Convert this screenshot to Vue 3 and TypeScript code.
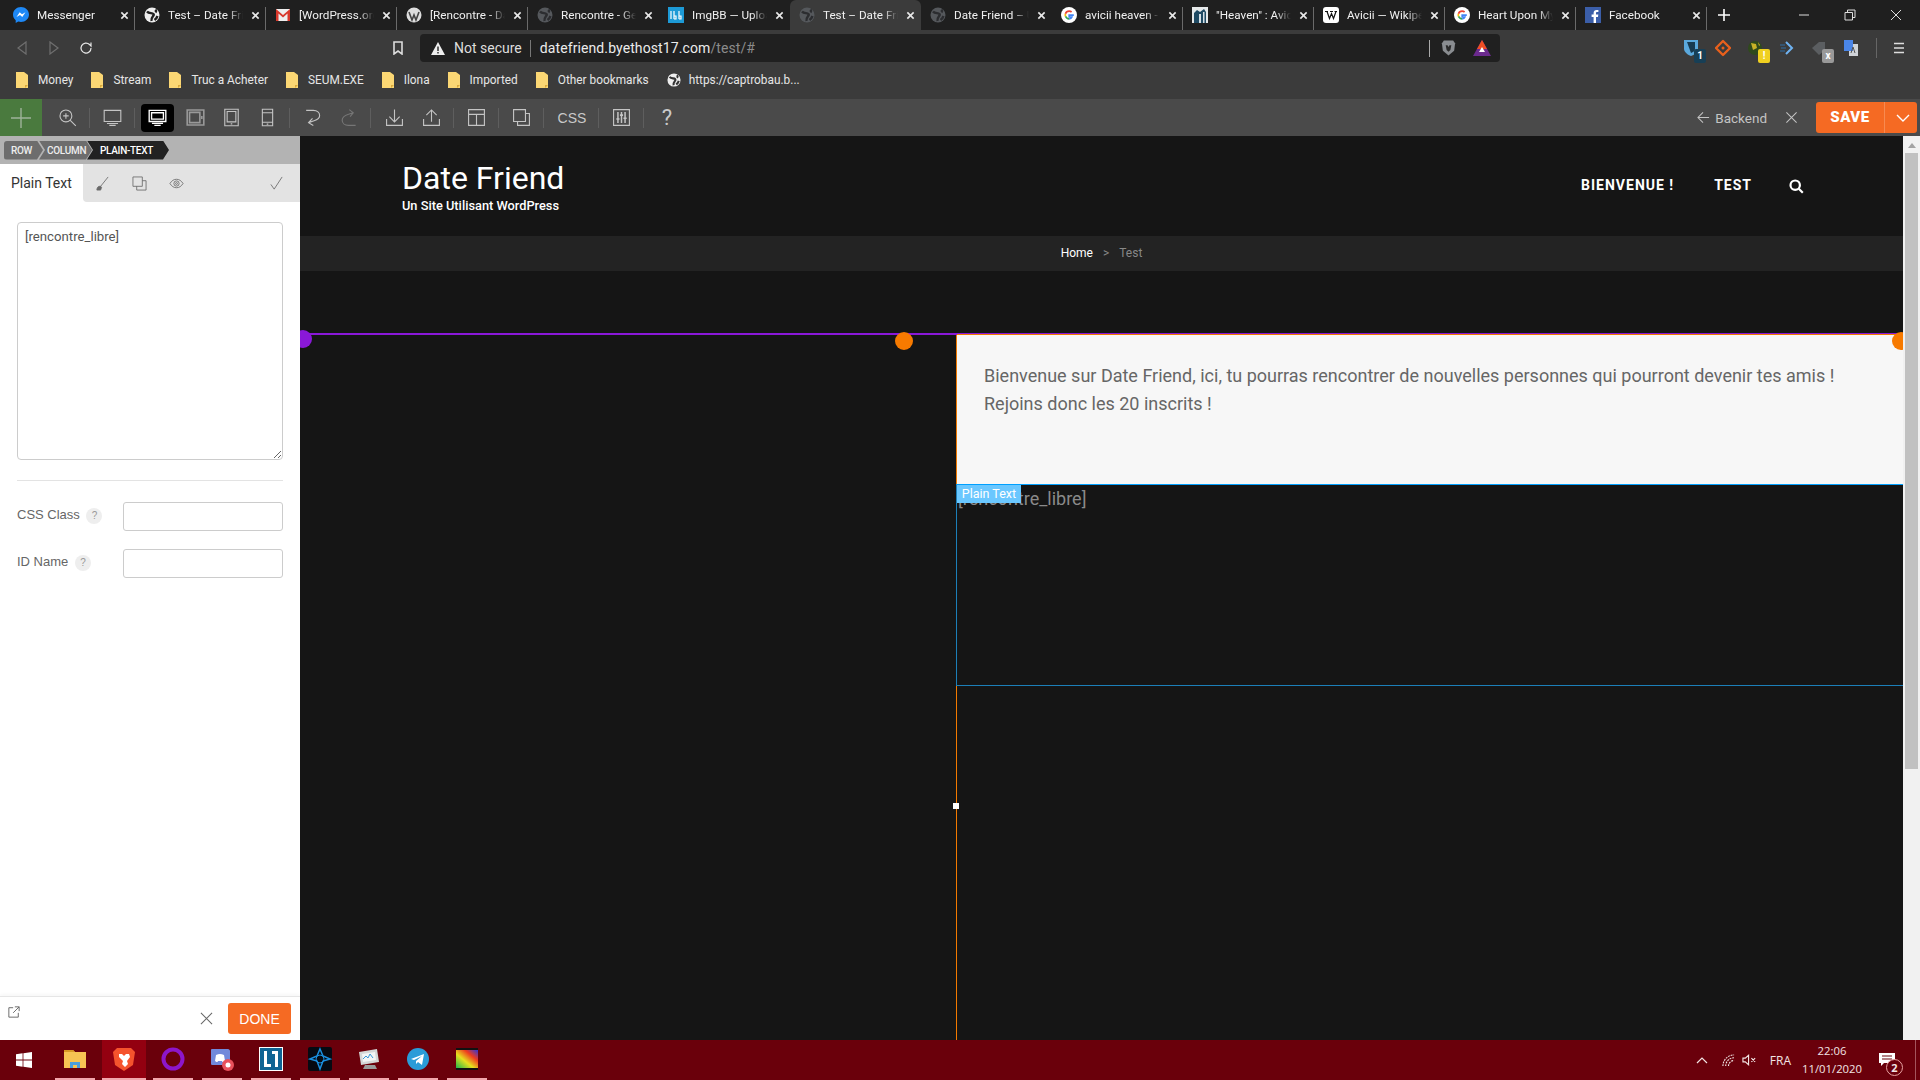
<script setup lang="ts">
type Tab = { title: string; icon: string; active?: boolean }

const tabs: Tab[] = [
  { title: 'Messenger', icon: 'messenger' },
  { title: 'Test – Date Friend', icon: 'globe' },
  { title: '[WordPress.org] Forums', icon: 'gmail' },
  { title: '[Rencontre - Dating', icon: 'wp' },
  { title: 'Rencontre - Gestion', icon: 'globe-dim' },
  { title: 'ImgBB — Upload Image', icon: 'imgbb' },
  { title: 'Test – Date Friend', icon: 'globe-dim', active: true },
  { title: 'Date Friend – Un Site', icon: 'globe-dim' },
  { title: 'avicii heaven - Recherche', icon: 'google' },
  { title: '"Heaven" : Avicii', icon: 'heaven' },
  { title: 'Avicii — Wikipédia', icon: 'wiki' },
  { title: 'Heart Upon My Sleeve', icon: 'google' },
  { title: 'Facebook', icon: 'facebook' },
]

const bookmarks = ['Money', 'Stream', 'Truc a Acheter', 'SEUM.EXE', 'Ilona', 'Imported', 'Other bookmarks']

const tools = [
  { id: 'zoom', d: 'M10 2.500a7.500 7.500 0 1 0 0 15a7.500 7.500 0 0 0 0-15M15.500 15.500l7 7M10 6.500v7M6.500 10h7', sep: true },
  { id: 'desktop', d: 'M1.500 3h21v14h-21zM5 19.500h14M8 22h8', sep: true },
  { id: 'active', d: 'M1.500 3h21v14h-21zM4.500 6h15v8h-15zM5 19.500h14M8 22h8' },
  { id: 'landscape', d: 'M1.500 2.500h21v19h-21zM4.500 5.500h13v13h-13zM20 10v4' },
  { id: 'tablet', d: 'M3.500 1.500h17v21h-17zM6.500 4.500h11v13h-11zM11 20h2' },
  { id: 'phone', d: 'M5.500 1.500h13v21h-13zM5.500 6h13M5.500 18h13M11 20.300h2', sep: true },
  { id: 'undo', d: 'M4 3h9c5 0 8 3 8 6.500S18 15 14 16l-7 2.500M12 13l-5 5.500 6 3.500' },
  { id: 'redo', dim: true, d: 'M21 22h-9c-5 0-8-3-8-6.500S7 9.500 12 8l6-2M13 2l5 4-4 5', sep: true },
  { id: 'download', d: 'M12 2v15M5.500 11l6.500 6.500 6.500-6.500M2 14v8h20v-8' },
  { id: 'upload', d: 'M12 17.500V2.500M5.500 9L12 2.500 18.500 9M2 14v8h20v-8', sep: true },
  { id: 'layout', d: 'M2 2h20v20H2zM2 8h20M12 8v14', sep: true },
  { id: 'copy', d: 'M2 2h15v15H2zM7 17v5h15V7h-5', sep: true },
]

const dockIcons = ['folder', 'brave', 'ring', 'discord', 'letter', 'blizzard', 'monitor', 'telegram', 'spectrum']
</script>

<template>
  <div class="screen">
    <!-- browser chrome -->
    <div class="tabstrip">
      <div v-for="tab in tabs" :key="tab.title + tab.icon" class="tab" :class="{ active: tab.active }">
        <svg class="favicon" viewBox="0 0 16 16">
          <template v-if="tab.icon === 'messenger'">
            <path d="M8 0C3.600 0 0 3.300 0 7.500c0 2.300 1 4.300 2.700 5.700V16l2.600-1.400c.8.300 1.800.4 2.700.4 4.400 0 8-3.300 8-7.500S12.400 0 8 0z" fill="#1e88f5" />
            <path d="M3.500 10l3.200-4.800 2.300 2 3.500-2-3.200 4.800-2.300-2z" fill="#fff" />
          </template>
          <template v-else-if="tab.icon === 'globe' || tab.icon === 'globe-dim'">
            <circle cx="8" cy="8" r="7.500" :fill="tab.icon === 'globe' ? '#eeeeee' : '#55585c'" />
            <path d="M3 4.500c2 2.500 5 1 6.500 2.500S6.500 10 7.500 14M11.500 2.500c.8 1 .8 2 0 3M10.500 13c1.500-1 2.500-2.500 3-4" fill="none" stroke-width="2.400" :stroke="tab.icon === 'globe' ? '#1f1f1f' : '#2c2d30'" />
          </template>
          <template v-else-if="tab.icon === 'gmail'">
            <path d="M1 2h14v12H1z" fill="#eee" />
            <path d="M1 14V2l7 6 7-6v12h-2.500V6.500L8 10.500 3.500 6.500V14z" fill="#d8382c" />
          </template>
          <template v-else-if="tab.icon === 'wp'">
            <circle cx="8" cy="8" r="7.500" fill="#ddd" />
            <path d="M3 5l3 8 2-5 2 5 3-8" fill="none" stroke="#444" stroke-width="1.600" />
          </template>
          <template v-else-if="tab.icon === 'imgbb'">
            <rect width="16" height="16" fill="#1d9ad6" />
            <path d="M3 4v8M6 4v8M6 9h2v3H6M11 4v8M11 9h2v3h-2" fill="none" stroke="#fff" stroke-width="1.200" />
          </template>
          <template v-else-if="tab.icon === 'google' ">
            <circle cx="8" cy="8" r="8" fill="#fff" />
            <path d="M12.800 8.200H8.200v1.800h2.700c-.4 1.200-1.400 1.900-2.800 1.900" fill="none" stroke="#4285f4" stroke-width="1.700" />
            <path d="M8.100 11.900c-1.700 0-3-1.100-3.600-2.600" fill="none" stroke="#34a853" stroke-width="1.700" />
            <path d="M4.500 9.300c-.3-.9-.3-1.800 0-2.600" fill="none" stroke="#fbbc05" stroke-width="1.700" />
            <path d="M4.500 6.700C5 5.100 6.400 4.100 8.100 4.100c1 0 1.800.3 2.500.9" fill="none" stroke="#ea4335" stroke-width="1.700" />
          </template>
          <template v-else-if="tab.icon === 'heaven'">
            <rect width="16" height="16" fill="#e6e9ea" />
            <path d="M2 16V6l3-3 3 2 4-3 2 3v11z" fill="#1f4a63" />
            <path d="M7 16V7h2v9zM11 16V5h1.500v11z" fill="#d6e0e6" />
          </template>
          <template v-else-if="tab.icon === 'wiki'">
            <rect width="16" height="16" rx="3" fill="#fff" />
            <path d="M2 4.500h3M4 4.500l2.500 7 2-5 2 5 2.500-7M11.500 4.500H14M7 4.500h3" fill="none" stroke="#111" stroke-width="1.200" />
          </template>
          <template v-else-if="tab.icon === 'facebook'">
            <rect width="16" height="16" fill="#3b5ea8" />
            <path d="M11 16v-6h2l.3-2.400H11V6.200c0-.7.200-1.100 1.200-1.100h1.200V3c-.3 0-1-.1-1.800-.1-1.800 0-3 1.100-3 3.100v1.600h-2V10h2v6z" fill="#fff" />
          </template>
        </svg>
        <span class="tab-title">{{ tab.title }}</span>
        <svg class="tab-close" viewBox="0 0 10 10"><path d="M1.500 1.500l7 7M8.500 1.500l-7 7" /></svg>
      </div>
      <svg class="new-tab" viewBox="0 0 12 12"><path d="M6 0v12M0 6h12" /></svg>
      <div class="window-controls">
        <svg viewBox="0 0 12 12"><path d="M1 6h10" /></svg>
        <svg viewBox="0 0 12 12"><path d="M1 3.500h7.500V11H1zM3.500 3.500V1H11v7.500H8.500" /></svg>
        <svg viewBox="0 0 12 12"><path d="M1 1l10 10M11 1L1 11" /></svg>
      </div>
    </div>

    <div class="addressbar">
      <svg class="nav-icon dim back" viewBox="0 0 12 14"><path d="M10 1L2 7l8 6z" /></svg>
      <svg class="nav-icon dim" viewBox="0 0 12 14"><path d="M2 1l8 6-8 6z" /></svg>
      <svg class="nav-icon" viewBox="0 0 14 14"><path d="M12 7a5 5 0 1 1-1.500-3.500L12 5V1.500" stroke-width="1.600" /></svg>
      <svg class="bookmark-icon" viewBox="0 0 10 14"><path d="M1 1h8v12L5 10l-4 3z" /></svg>
      <div class="omnibox">
        <svg class="warn" viewBox="0 0 14 13"><path d="M7 0l7 13H0z" fill="#eee" /><path d="M6.300 4.500h1.400v4.500H6.300zM6.300 10h1.400v1.400H6.300z" fill="#222" /></svg>
        <span class="not-secure">Not secure</span>
        <span class="omni-sep"></span>
        <span class="url">datefriend.byethost17.com<span class="url-path">/test/#</span></span>
        <span class="omni-sep end"></span>
        <svg class="shield" viewBox="0 0 16 18"><path d="M3 1h10l2 3-1 8-6 5-6-5-1-8z" fill="#8a8d91" /><path d="M5 6h2l1 2 1-2h2l-1 5-2 2-2-2z" fill="#2a2a2a" /></svg>
        <svg class="bat" viewBox="0 0 18 16"><path d="M9 0l9 16H0z" fill="#6b2a8e" /><path d="M9 0l5 9H4z" fill="#f04e23" /><path d="M9 7l3 5H6z" fill="#fff" /></svg>
      </div>
      <div class="extensions">
        <span class="ext ext-bw"><svg viewBox="0 0 16 18"><path d="M1 1h14v9c0 3-4 6-7 7-3-1-7-4-7-7z" fill="#5aa8dc" /><path d="M4 3h8v7c0 2-2 3-4 4z" fill="#173a50" /></svg><b class="ext-badge navy">1</b></span>
        <span class="ext ext-orange"><svg viewBox="0 0 16 16"><path d="M8 1l7 7-7 7-7-7z" fill="none" stroke="#e8601c" stroke-width="2.400" stroke-linejoin="round" /><circle cx="8" cy="8" r="1.500" fill="#e8601c" /></svg></span>
        <span class="ext ext-earth"><svg viewBox="0 0 16 16"><circle cx="8" cy="8" r="7" fill="#2f4a1c" /><path d="M4 3l5 1 1 4-4 2zM11 2l2 3-1 1z" fill="#c9b227" /></svg><b class="ext-badge yellow">!</b></span>
        <span class="ext ext-arrow"><svg viewBox="0 0 16 16"><path d="M7 2l6 6-6 6" fill="none" stroke="#6fb3f2" stroke-width="2" /><path d="M1 5h5M2 8h5M1 11h5" stroke="#2f6ea8" stroke-width="1.200" /></svg></span>
        <span class="ext ext-tag"><svg viewBox="0 0 16 16"><path d="M1 8l7-6h6v8l-6 5z" fill="#5b5e61" /></svg><b class="ext-badge grey">x</b></span>
        <span class="ext ext-translate"><svg viewBox="0 0 16 16"><path d="M6 4h9v12H6z" fill="#cfd3d8" /><path d="M1 0h9v11H1z" fill="#4a86e8" /><path d="M8 13l2-6 2 6" fill="none" stroke="#555" /></svg></span>
        <span class="ext-sep"></span>
        <svg class="menu-icon" viewBox="0 0 12 12"><path d="M1 1.500h10M1 6h10M1 10.500h10" /></svg>
      </div>
    </div>

    <div class="bookmarks">
      <span v-for="b in bookmarks" :key="b" class="bookmark">
        <svg viewBox="0 0 12 16"><path d="M0 0h8l4 3v13H0z" fill="#fbd774" /><path d="M12 13H9v3z" fill="#d9a93a" /></svg>
        {{ b }}
      </span>
      <span class="bookmark link">
        <svg class="link-globe" viewBox="0 0 16 16"><circle cx="8" cy="8" r="7.500" fill="#eee" /><path d="M3 4.500c2 2.500 5 1 6.500 2.500S6.500 10 7.500 14M11.500 2.500c.8 1 .8 2 0 3M10.500 13c1.500-1 2.500-2.500 3-4" fill="none" stroke="#333" stroke-width="2.400" /></svg>
        https://captrobau.b...
      </span>
    </div>

    <!-- page builder toolbar -->
    <div class="builder-bar">
      <div class="add-btn"><svg viewBox="0 0 20 20"><path d="M10 0v20M0 10h20" /></svg></div>
      <div class="tools">
        <template v-for="t in tools" :key="t.id">
          <button class="tool" :class="['t-' + t.id, { on: t.id === 'active', dim: t.dim }]">
            <svg viewBox="0 0 24 24"><path :d="t.d" /></svg>
          </button>
          <span v-if="t.sep" class="tool-sep"></span>
        </template>
        <button class="tool css">CSS</button>
        <span class="tool-sep"></span>
        <button class="tool">
          <svg viewBox="0 0 24 24"><path d="M2 2h20v20H2z" /><path class="thick" d="M7.500 5v14M12 5v14M16.500 5v14M5.500 14h4M10 9h4M14.500 13h4" /></svg>
        </button>
        <span class="tool-sep"></span>
        <button class="tool help">?</button>
      </div>
      <div class="bar-right">
        <svg class="back-arrow" viewBox="0 0 14 14"><path d="M13 7H1M6.500 1.500L1 7l5.500 5.500" /></svg>
        <span class="backend">Backend</span>
        <svg class="bar-close" viewBox="0 0 14 14"><path d="M1.500 1.500l11 11M12.500 1.500l-11 11" /></svg>
        <div class="save">
          <span class="save-label">SAVE</span>
          <span class="save-caret"><svg viewBox="0 0 14 8"><path d="M1 1l6 6 6-6" /></svg></span>
        </div>
      </div>
    </div>

    <div class="workspace">
      <aside class="panel">
        <div class="crumbs-band">
          <span class="pill p-row">ROW</span>
          <span class="pill p-col">COLUMN</span>
          <span class="pill p-text">PLAIN-TEXT</span>
        </div>
        <div class="panel-tabs">
          <span class="panel-tab">Plain Text</span>
          <div class="panel-tools">
            <svg class="pt brush" viewBox="0 0 16 16"><path d="M14 1L6 11" /><path class="fill" d="M2 15c0-2.500 1.500-4.500 4-4l1 1-1 3z" /></svg>
            <svg class="pt copy" viewBox="0 0 16 16"><path d="M1 1h10v10H1zM5 11v4h10V5h-4" /></svg>
            <svg class="pt eye" viewBox="0 0 16 16"><path d="M1 8c2-3 4-4.500 7-4.500S13 5 15 8c-2 3-4 4.500-7 4.500S3 11 1 8z" /><circle cx="8" cy="8" r="2.800" /><circle cx="8" cy="8" r="1" /></svg>
            <svg class="pt check" viewBox="0 0 16 16"><path d="M2 9l3.500 5L14 1" /></svg>
          </div>
        </div>
        <div class="panel-body">
          <textarea class="code" spellcheck="false">[rencontre_libre]</textarea>
          <hr class="rule" />
          <div class="field">
            <label>CSS Class <i class="hint">?</i></label>
            <input type="text" />
          </div>
          <div class="field">
            <label>ID Name <i class="hint">?</i></label>
            <input type="text" />
          </div>
        </div>
        <div class="panel-foot">
          <svg class="popout" viewBox="0 0 14 14"><path d="M6 2H1v11h11V8M8 1h5v5M13 1L6 8" /></svg>
          <svg class="foot-close" viewBox="0 0 14 14"><path d="M1 1l12 12M13 1L1 13" /></svg>
          <button class="done">DONE</button>
        </div>
      </aside>

      <main class="canvas">
        <div class="page">
          <header class="site-head">
            <div class="brand">
              <div class="site-name">Date Friend</div>
              <div class="site-tag">Un Site Utilisant WordPress</div>
            </div>
            <nav class="site-nav">
              <a>BIENVENUE !</a>
              <a>TEST</a>
              <svg class="site-search" viewBox="0 0 15 15"><circle cx="6.200" cy="6.200" r="4.700" /><path d="M9.800 9.800l4 4" /></svg>
            </nav>
          </header>
          <div class="page-crumbs"><b>Home</b><i>&gt;</i><span>Test</span></div>
          <div class="row">
            <span class="dot purple"></span>
            <span class="dot orange mid"></span>
            <span class="dot orange end"></span>
            <div class="col-left"></div>
            <div class="col-right">
              <div class="welcome">
                <p>Bienvenue sur Date Friend, ici, tu pourras rencontrer de nouvelles personnes qui pourront devenir tes amis !<br />Rejoins donc les 20 inscrits !</p>
              </div>
              <div class="selected">
                <span class="el-label">Plain Text</span>
                <span class="shortcode">[rencontre_libre]</span>
              </div>
              <div class="col-rest"><span class="handle"></span></div>
            </div>
          </div>
        </div>
        <div class="scrollbar">
          <svg class="scroll-up" viewBox="0 0 8 5"><path d="M4 0l4 5H0z" /></svg>
          <div class="scroll-thumb"></div>
        </div>
      </main>
    </div>

    <!-- windows taskbar -->
    <footer class="taskbar">
      <svg class="start" viewBox="0 0 16 16"><path d="M0 2.200L6.600 1.300V7.600H0zM7.400 1.200L16 0V7.600H7.400zM0 8.400h6.600v6.300L0 13.800zM7.400 8.400H16V16l-8.600-1.200z" fill="#fff" /></svg>
      <div class="dock">
        <div v-for="d in dockIcons" :key="d" class="dock-item" :class="{ focused: d === 'brave' }">
          <svg viewBox="0 0 24 24">
            <template v-if="d === 'folder'">
              <path d="M1 3h9l2 2h11v16H1z" fill="#f6c453" /><path d="M1 3h9l2 2H1z" fill="#d99a25" /><path d="M7 15h10v6h-3v-3h-4v3H7z" fill="#4a9fdc" />
            </template>
            <template v-else-if="d === 'brave'">
              <path d="M5 1h14l4 4-2 13-9 6-9-6L1 5z" fill="#f5532d" /><path d="M7 7h3l2 2 2-2h3l1 3-3 4 1 3-3 3-3-3 1-3-4-4z" fill="#fff" />
            </template>
            <template v-else-if="d === 'ring'">
              <circle cx="12" cy="12" r="9.500" fill="none" stroke="#8d16c9" stroke-width="4" />
            </template>
            <template v-else-if="d === 'discord'">
              <path d="M2 2h16c1 0 2 1 2 2v14H2c-1 0-1-1-1-2V3c0-.5.500-1 1-1z" fill="#7289da" /><path d="M6 8c3-1.500 5-1.500 8 0l1 6c-1 1-2 1-2.500 1l-.5-1H8l-.5 1c-.5 0-1.500 0-2.500-1z" fill="#fff" /><circle cx="18" cy="18" r="6" fill="#e8505b" /><circle cx="18" cy="18" r="2.500" fill="#fff" />
            </template>
            <template v-else-if="d === 'letter'">
              <rect x="0.500" y="0.500" width="23" height="23" fill="#0f6494" stroke="#fff" /><path d="M5 4h3v13h4v3H5zM13 4h6v16h-3V7h-3z" fill="#fff" />
            </template>
            <template v-else-if="d === 'blizzard'">
              <rect width="24" height="24" rx="2" fill="#060a12" /><path d="M12 2l3 7 7 3-7 2-3 8-3-8-7-2 7-3z" fill="none" stroke="#1a8fe0" stroke-width="1.500" /><circle cx="12" cy="12" r="4" fill="none" stroke="#1a8fe0" />
            </template>
            <template v-else-if="d === 'monitor'">
              <path d="M2 5l18-3 2 13-18 3z" fill="#d5d8d8" /><path d="M5 7l13-2 1 8-13 2z" fill="#f4f6f6" /><path d="M6 12l3-3 2 2 2-4 3 4" fill="none" stroke="#3a9ad9" /><path d="M8 18h10l2 4H6z" fill="#9a9c9c" />
            </template>
            <template v-else-if="d === 'telegram'">
              <circle cx="12" cy="12" r="11" fill="#2a9cd8" /><path d="M5 12l13-5-2 11-4-3-2 2v-3l6-5-8 4z" fill="#fff" />
            </template>
            <template v-else>
              <defs>
                <linearGradient id="spec" x1="0" y1="1" x2="1" y2="0">
                  <stop offset="0" stop-color="#1fb84a" /><stop offset=".4" stop-color="#e6e01e" /><stop offset=".7" stop-color="#ef3b1e" /><stop offset="1" stop-color="#2b35d8" />
                </linearGradient>
              </defs>
              <rect x="1" y="1" width="22" height="22" fill="#111" /><rect x="1" y="3" width="22" height="18" fill="url(#spec)" />
            </template>
          </svg>
        </div>
      </div>
      <div class="tray">
        <svg class="tray-chev" viewBox="0 0 12 7"><path d="M1 6l5-5 5 5" /></svg>
        <svg class="tray-wifi" viewBox="0 0 14 14"><path d="M1 13A12 12 0 0 1 13 1M4 13a9 9 0 0 1 9-9M7 13a6 6 0 0 1 6-6" stroke-dasharray="2 1" /></svg>
        <svg class="tray-vol" viewBox="0 0 16 12"><path d="M1 4h2.500L7 1v10L3.500 8H1zM10 4l4 4M14 4l-4 4" /></svg>
        <span class="tray-lang">FRA</span>
        <div class="clock"><span>22:06</span><span>11/01/2020</span></div>
        <div class="notif">
          <svg viewBox="0 0 16 14"><path d="M0 0h16v10H5l-3 3v-3H0z" fill="#fff" /><path d="M3 3h10M3 6h10" stroke="#6a000b" /></svg>
          <b>2</b>
        </div>
        <span class="desk-peek"></span>
      </div>
    </footer>
  </div>
</template>

<style scoped>
.screen {
  width: 1920px;
  height: 1080px;
  display: flex;
  flex-direction: column;
  overflow: hidden;
  font-family: Roboto, "Liberation Sans", sans-serif;
}

svg {
  display: block;
  flex: none;
}

/* tabs */
.tabstrip {
  height: 30px;
  flex: none;
  display: flex;
  align-items: stretch;
  padding-left: 4px;
  background: #1f1f1f;
  color: #f0f0f0;
  font-size: 11.7px;
  position: relative;
}
.tab {
  width: 131px;
  display: flex;
  align-items: center;
  padding: 0 6px 0 9px;
  gap: 8px;
  position: relative;
  box-sizing: border-box;
}
.tab::after {
  content: "";
  position: absolute;
  right: 0;
  top: 7px;
  bottom: 0;
  width: 1px;
  background: #6a6a6a;
}
.tab.active {
  background: #3b3b3b;
  border-radius: 6px 6px 0 0;
}
.tab.active::after,
.tab:nth-child(6)::after,
.tab:nth-child(5)::after,
.tab:nth-child(7)::after,
.tab:nth-child(8)::after {
  display: none;
}
.favicon {
  width: 16px;
  height: 16px;
}
.tab-title {
  flex: 1;
  min-width: 0;
  white-space: nowrap;
  overflow: hidden;
  -webkit-mask-image: linear-gradient(to right, #000 80%, transparent);
  mask-image: linear-gradient(to right, #000 80%, transparent);
}
.tab-close {
  width: 9px;
  height: 9px;
}
.tab-close path {
  stroke: #e8e8e8;
  stroke-width: 1.8;
  fill: none;
}
.new-tab {
  width: 12px;
  height: 12px;
  align-self: center;
  margin-left: 11px;
}
.new-tab path {
  stroke: #fff;
  stroke-width: 1.6;
}
.window-controls {
  margin-left: auto;
  display: flex;
  gap: 34px;
  padding: 9px 18px 0 0;
}
.window-controls svg {
  width: 12px;
  height: 12px;
}
.window-controls path {
  stroke: #ddd;
  fill: none;
  stroke-width: 1;
}

/* address row */
.addressbar {
  flex: none;
  background: #3b3b3b;
  display: flex;
  align-items: center;
  padding-top: 4px;
  height: 28px;
}
.nav-icon {
  width: 14px;
  height: 14px;
  margin-right: 18px;
}
.nav-icon.back {
  margin-left: 15px;
}
.nav-icon path {
  fill: none;
  stroke: #e6e6e6;
  stroke-width: 1.2;
}
.nav-icon.dim path {
  stroke: #6f6f6f;
}
.bookmark-icon {
  width: 10px;
  height: 14px;
  margin-left: 282px;
}
.bookmark-icon path {
  fill: none;
  stroke: #ddd;
  stroke-width: 1.6;
}
.omnibox {
  width: 1080px;
  margin-left: 17px;
  height: 28px;
  background: #202020;
  border-radius: 4px;
  display: flex;
  align-items: center;
  color: #ececec;
  font-size: 14px;
  box-sizing: border-box;
  padding-left: 11px;
}
.warn {
  width: 14px;
  height: 13px;
}
.not-secure {
  margin-left: 9px;
  font-size: 14px;
  color: #ddd;
}
.omni-sep {
  width: 1px;
  height: 17px;
  background: #777;
  margin: 0 9px 0 8px;
}
.omni-sep.end {
  margin: 0 0 0 auto;
  background: #aaa;
}
.url {
  letter-spacing: .1px;
}
.url-path {
  color: #8b8b8b;
}
.shield {
  width: 15px;
  height: 18px;
  margin-left: 11px;
}
.bat {
  width: 18px;
  height: 16px;
  margin: 0 9px 0 17px;
}
.extensions {
  margin-left: auto;
  display: flex;
  align-items: center;
  padding-right: 15px;
}
.ext {
  position: relative;
  width: 16px;
  height: 18px;
  margin-right: 16px;
}
.ext svg {
  width: 16px;
  height: 18px;
}
.ext-badge {
  position: absolute;
  right: -7px;
  bottom: -6px;
  width: 12px;
  height: 14px;
  border-radius: 2px;
  font: bold 10px/14px Roboto, sans-serif;
  text-align: center;
  color: #fff;
}
.ext-badge.navy {
  background: #173f56;
}
.ext-badge.yellow {
  background: #f0d020;
}
.ext-badge.grey {
  background: #999;
}
.ext-sep {
  width: 1px;
  height: 20px;
  background: #666;
  margin: 0 16px 0 1px;
}
.menu-icon {
  width: 12px;
  height: 12px;
}
.menu-icon path {
  stroke: #ddd;
  stroke-width: 1.6;
}

/* bookmarks */
.bookmarks {
  height: 37px;
  flex: none;
  background: #3b3b3b;
  display: flex;
  align-items: center;
  gap: 18px;
  padding: 0 0 1px 16px;
  color: #e6e6e6;
  font-size: 11.85px;
  box-sizing: border-box;
}
.bookmark {
  display: flex;
  align-items: center;
  gap: 10px;
  white-space: nowrap;
}
.bookmark svg {
  width: 12px;
  height: 16px;
}
.bookmark .link-globe {
  width: 14px;
  height: 14px;
}
.bookmark.link {
  gap: 8px;
}

/* builder bar */
.builder-bar {
  height: 37px;
  flex: none;
  background: #4a4a4a;
  display: flex;
  align-items: center;
}
.add-btn {
  width: 42px;
  height: 37px;
  background: #4a7a3e;
  display: flex;
  align-items: center;
  justify-content: center;
}
.add-btn svg {
  width: 20px;
  height: 20px;
}
.add-btn path {
  stroke: #9fb39a;
  stroke-width: 1.4;
}
.tools {
  display: flex;
  align-items: center;
  padding-left: 7px;
}
.tool {
  width: 36px;
  height: 28px;
  padding: 0;
  border: 0;
  background: none;
  color: #c9c9c9;
  display: flex;
  align-items: center;
  justify-content: center;
  font-family: inherit;
}
.tool svg {
  width: 19px;
  height: 19px;
}
.tool path {
  fill: none;
  stroke: #c4c4c4;
  stroke-width: 1.4;
}
.tool .thick {
  stroke-width: 1.9;
}
.tool.dim path {
  stroke: #767676;
}
.tool.on {
  width: 33px;
  margin-left: 2px;
  margin-right: 3px;
  background: #000;
  border-radius: 4px;
}
.tool.on path {
  stroke: #fff;
  stroke-width: 1.7;
}
.t-landscape path {
  stroke: #999;
  stroke-width: 2;
}
.t-download {
  margin-left: 1px;
}
.t-upload {
  margin-left: 1px;
}
.tool.css {
  width: 44px;
  margin-left: 2px;
  font: 14px "Liberation Sans", sans-serif;
}
.tool.help {
  margin-left: 1px;
  font-size: 22px;
}
.tool-sep {
  width: 1px;
  height: 20px;
  background: #5e5e5e;
  margin: 0 4px;
}
.bar-right {
  margin-left: auto;
  display: flex;
  align-items: center;
  padding-right: 3px;
  color: #c4c4c4;
  font-size: 13.5px;
}
.back-arrow {
  width: 13px;
  height: 13px;
  margin-right: 5px;
}
.back-arrow path,
.bar-close path {
  fill: none;
  stroke: #c4c4c4;
  stroke-width: 1.1;
}
.bar-close {
  width: 13px;
  height: 13px;
  margin: 0 18px;
}
.save {
  width: 101px;
  height: 31px;
  border-radius: 3px;
  background: #f56a23;
  display: flex;
  color: #fff;
}
.save-label {
  width: 68px;
  text-align: center;
  font-weight: 900;
  font-size: 15px;
  line-height: 31px;
  letter-spacing: .5px;
  border-right: 1px solid #f88a50;
}
.save-caret {
  flex: 1;
  display: flex;
  align-items: center;
  justify-content: center;
  padding-left: 3px;
}
.save-caret svg {
  width: 14px;
  height: 8px;
}
.save-caret path {
  fill: none;
  stroke: #fff;
  stroke-width: 1.4;
}

/* main split */
.workspace {
  flex: 1;
  min-height: 0;
  display: flex;
}
.panel {
  width: 300px;
  flex: none;
  background: #fff;
  display: flex;
  flex-direction: column;
}
.crumbs-band {
  height: 28px;
  flex: none;
  background: #b3b3b3;
  display: flex;
  align-items: center;
  padding-left: 4px;
}
.pill {
  height: 19px;
  line-height: 19px;
  font-size: 10px;
  font-weight: 500;
  letter-spacing: -.3px;
  color: #eee;
  background: #6d6d6d;
  white-space: nowrap;
}
.p-row {
  width: 39px;
  padding-left: 7px;
  box-sizing: border-box;
  border-radius: 3px 0 0 3px;
  clip-path: polygon(0 0, 33px 0, 100% 50%, 33px 100%, 0 100%);
}
.p-col {
  width: 53px;
  padding-left: 8px;
  margin-left: -4px;
  box-sizing: border-box;
  clip-path: polygon(0 0, 47px 0, 100% 50%, 47px 100%, 0 100%, 6px 50%);
}
.p-text {
  width: 82px;
  padding-left: 13px;
  margin-left: -5px;
  box-sizing: border-box;
  background: #222;
  color: #fff;
  clip-path: polygon(0 0, 76px 0, 100% 50%, 76px 100%, 0 100%, 6px 50%);
}
.panel-tabs {
  height: 38px;
  flex: none;
  display: flex;
}
.panel-tab {
  width: 83px;
  padding-left: 11px;
  box-sizing: border-box;
  font-size: 14px;
  line-height: 38px;
  color: #333;
}
.panel-tools {
  flex: 1;
  background: #e3e3e3;
  border-bottom-left-radius: 4px;
  display: flex;
  align-items: center;
  padding-left: 12px;
  gap: 22px;
}
.pt {
  width: 15px;
  height: 15px;
}
.pt path,
.pt circle {
  fill: none;
  stroke: #6a6a6a;
  stroke-width: .9;
}
.pt .fill {
  fill: #6a6a6a;
}
.check {
  margin-left: auto;
  margin-right: 16px;
}
.panel-body {
  flex: 1;
  padding: 20px 17px 0;
}
.code {
  display: block;
  width: 266px;
  height: 238px;
  box-sizing: border-box;
  padding: 5px 7px;
  border: 1px solid #ccc;
  border-radius: 4px;
  outline: 0;
  font: 13.2px/1.3 Roboto, "Liberation Sans", sans-serif;
  color: #555;
}
.rule {
  border: 0;
  border-top: 1px solid #e3e3e3;
  margin: 20px 0 21px;
}
.field {
  display: flex;
  justify-content: space-between;
  height: 29px;
  margin-bottom: 18px;
}
.field label {
  font: 13px/26px "Liberation Sans", sans-serif;
  color: #666;
}
.hint {
  display: inline-block;
  width: 16px;
  height: 16px;
  margin-left: 3px;
  border-radius: 50%;
  background: #eee;
  color: #999;
  font: 10px/16px "Liberation Sans", sans-serif;
  text-align: center;
}
.field input {
  width: 160px;
  height: 29px;
  box-sizing: border-box;
  border: 1px solid #ccc;
  border-radius: 3px;
  outline: 0;
}
.panel-foot {
  height: 44px;
  flex: none;
  box-sizing: border-box;
  border-top: 1px solid #e6e6e6;
  box-shadow: 0 -2px 3px rgba(0, 0, 0, .03);
  display: flex;
  align-items: flex-start;
  padding: 6px 9px 0 8px;
}
.popout {
  width: 12px;
  height: 12px;
  margin-top: 3px;
}
.popout path,
.foot-close path {
  fill: none;
  stroke: #666;
  stroke-width: 1.1;
}
.foot-close {
  width: 13px;
  height: 13px;
  margin: 9px 15px 0 auto;
}
.done {
  width: 63px;
  height: 31px;
  border: 0;
  padding: 0;
  border-radius: 3px;
  background: #f56a23;
  color: #fff;
  font: 14px "Liberation Sans", sans-serif;
}

/* page in the iframe */
.canvas {
  flex: 1;
  min-width: 0;
  display: flex;
  background: #151515;
}
.page {
  flex: 1;
  min-width: 0;
  display: flex;
  flex-direction: column;
}
.site-head {
  height: 100px;
  flex: none;
  display: flex;
  justify-content: space-between;
  padding: 24px 99px 0 102px;
  box-sizing: border-box;
  color: #fff;
}
.site-name {
  font-size: 32px;
  line-height: 36px;
}
.site-tag {
  font-size: 12.8px;
  font-weight: 500;
  line-height: 16px;
  margin-top: 2px;
}
.site-nav {
  display: flex;
  align-items: flex-start;
  font-size: 14px;
  font-weight: 700;
  letter-spacing: 1px;
  gap: 40px;
  padding-top: 17px;
}
.site-search {
  width: 15px;
  height: 15px;
  margin-left: -3px;
  margin-top: 2px;
}
.site-search circle,
.site-search path {
  fill: none;
  stroke: #fff;
  stroke-width: 2.2;
}
.page-crumbs {
  height: 35px;
  flex: none;
  box-sizing: border-box;
  padding: 0 0 2px 0;
  background: #232323;
  display: flex;
  justify-content: center;
  align-items: center;
  gap: 10px;
  font-size: 12px;
  color: #888;
}
.page-crumbs b {
  font-weight: 400;
  color: #fff;
}
.page-crumbs i {
  font-style: normal;
}
.row {
  margin-top: 62px;
  flex: 1;
  display: flex;
  border-top: 2px solid #8a18d8;
  position: relative;
}
.col-left {
  width: 656px;
  flex: none;
}
.col-right {
  flex: 1;
  min-width: 0;
  display: flex;
  flex-direction: column;
  border-left: 1px solid #f27a00;
}
.welcome {
  height: 150px;
  flex: none;
  margin-top: -1px;
  box-sizing: border-box;
  background: #f7f7f7;
  border-top: 1px solid #f27a00;
  padding: 27px 28px 0 27px;
  color: #666;
  font-size: 18px;
  line-height: 28px;
}
.welcome p {
  margin: 0;
}
.selected {
  height: 202px;
  flex: none;
  box-sizing: border-box;
  border-top: 1px solid #00a0ff;
  border-bottom: 1px solid #1c7fb8;
  margin-left: -1px;
  border-left: 1px solid #1c7fb8;
  padding: 3px 0 0 1px;
  position: relative;
  font-size: 18px;
  line-height: 22px;
  color: #8a8a8a;
}
.el-label {
  position: absolute;
  left: 0;
  top: 0;
  width: 64px;
  height: 18px;
  background: #6ac7ff;
  color: #fff;
  font-size: 12.5px;
  line-height: 18px;
  text-align: center;
}
.col-rest {
  flex: 1;
  position: relative;
}
.handle {
  position: absolute;
  left: -4px;
  top: 117px;
  width: 6px;
  height: 6px;
  background: #fff;
}
.dot {
  position: absolute;
  width: 18px;
  height: 18px;
  border-radius: 50%;
  top: -3px;
}
.dot.purple {
  background: #8a18d8;
  left: -6px;
  top: -5px;
  clip-path: inset(0 0 0 6px);
}
.dot.orange {
  background: #f77a00;
}
.dot.mid {
  left: 595px;
}
.dot.end {
  right: -7px;
  clip-path: inset(0 7px 0 0);
}
.scrollbar {
  width: 17px;
  flex: none;
  background: #f1f1f1;
  box-sizing: border-box;
  padding: 0 2px;
}
.scroll-up {
  width: 8px;
  height: 5px;
  margin: 7px auto 5px;
}
.scroll-up path {
  fill: #a3a3a3;
}
.scroll-thumb {
  height: 616px;
  background: #c1c1c1;
}

/* taskbar */
.taskbar {
  height: 40px;
  flex: none;
  background: #6a000b;
  display: flex;
  align-items: stretch;
  color: #f2e4e4;
}
.start {
  width: 16px;
  height: 16px;
  margin: 12px 0 0 16px;
}
.dock {
  display: flex;
  padding-left: 21px;
  gap: 5px;
}
.dock-item {
  width: 44px;
  position: relative;
  display: flex;
  align-items: center;
  justify-content: center;
  padding-bottom: 2px;
  box-sizing: border-box;
}
.dock-item::after {
  content: "";
  position: absolute;
  left: 2px;
  right: 2px;
  bottom: 0;
  height: 2px;
  background: #f2a6ac;
}
.dock-item.focused {
  background: #930010;
}
.dock-item.focused::after {
  left: 0;
  right: 0;
}
.dock-item svg {
  width: 24px;
  height: 24px;
}
.tray {
  margin-left: auto;
  display: flex;
  align-items: center;
  font-size: 12px;
  font-family: "Open Sans", Roboto, sans-serif;
}
.tray svg path {
  fill: none;
  stroke: #f2e4e4;
  stroke-width: 1.2;
}
.tray-chev {
  width: 12px;
  height: 7px;
  margin-right: 14px;
}
.tray-wifi {
  width: 13px;
  height: 13px;
  margin-right: 7px;
}
.tray-vol {
  width: 15px;
  height: 12px;
  margin-right: 13px;
}
.tray-lang {
  margin-right: 11px;
}
.clock {
  width: 60px;
  display: flex;
  flex-direction: column;
  align-items: center;
  gap: 2px;
  line-height: 16px;
  margin-right: 17px;
  white-space: nowrap;
  font-size: 11.3px;
}
.notif {
  position: relative;
  width: 16px;
  margin-right: 20px;
}
.notif svg {
  width: 16px;
  height: 14px;
}
.tray .notif svg path:first-child {
  fill: #fff;
  stroke: none;
}
.tray .notif svg path:last-child {
  stroke: #6a000b;
}
.notif b {
  position: absolute;
  left: 7px;
  top: 6px;
  width: 15px;
  height: 15px;
  border-radius: 50%;
  background: #6a000b;
  border: 1px solid #e9a3a3;
  font-size: 11px;
  line-height: 15px;
  text-align: center;
}
.desk-peek {
  width: 1px;
  height: 40px;
  background: #a4545c;
  margin-right: 4px;
}
</style>

<style>
html,
body {
  margin: 0;
  background: #151515;
  overflow: hidden;
}
</style>
